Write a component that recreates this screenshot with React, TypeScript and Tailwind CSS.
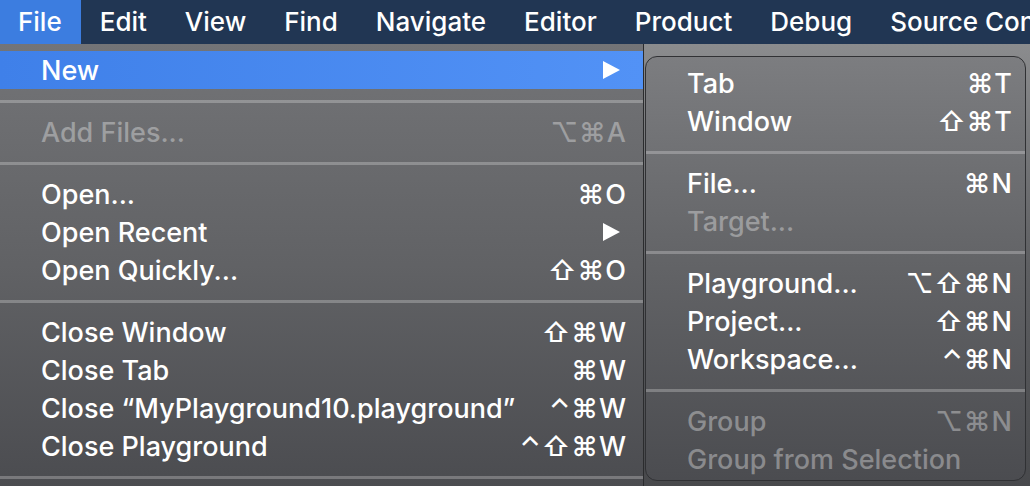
import React from "react";

type Item =
  | { type: "sep" }
  | { type: "item"; label: string; shortcut?: string; disabled?: boolean; submenu?: boolean; active?: boolean };

const leftItems: Item[] = [
  { type: "item", label: "New", submenu: true, active: true },
  { type: "sep" },
  { type: "item", label: "Add Files...", shortcut: "⌥⌘A", disabled: true },
  { type: "sep" },
  { type: "item", label: "Open...", shortcut: "⌘O" },
  { type: "item", label: "Open Recent", submenu: true },
  { type: "item", label: "Open Quickly...", shortcut: "⇧⌘O" },
  { type: "sep" },
  { type: "item", label: "Close Window", shortcut: "⇧⌘W" },
  { type: "item", label: "Close Tab", shortcut: "⌘W" },
  { type: "item", label: "Close “MyPlayground10.playground”", shortcut: "⌃⌘W" },
  { type: "item", label: "Close Playground", shortcut: "⌃⇧⌘W" },
  { type: "sep" },
];

const rightItems: Item[] = [
  { type: "item", label: "Tab", shortcut: "⌘T" },
  { type: "item", label: "Window", shortcut: "⇧⌘T" },
  { type: "sep" },
  { type: "item", label: "File...", shortcut: "⌘N" },
  { type: "item", label: "Target...", disabled: true },
  { type: "sep" },
  { type: "item", label: "Playground...", shortcut: "⌥⇧⌘N" },
  { type: "item", label: "Project...", shortcut: "⇧⌘N" },
  { type: "item", label: "Workspace...", shortcut: "⌃⌘N" },
  { type: "sep" },
  { type: "item", label: "Group", shortcut: "⌥⌘N", disabled: true },
  { type: "item", label: "Group from Selection", disabled: true },
];

const Triangle = () => (
  <svg width="18" height="18" viewBox="0 0 18 18" className="mr-[7px]">
    <polygon points="1,0 18,9 1,18" fill="#ffffff" />
  </svg>
);

function Rows({ items, pl, pr }: { items: Item[]; pl: string; pr: string }) {
  return (
    <>
      {items.map((it, i) =>
        it.type === "sep" ? (
          <div key={i} className="h-[24px] flex items-center">
            <div className="h-[3px] w-full bg-white/25" />
          </div>
        ) : (
          <div
            key={i}
            className={`h-[38px] flex items-center justify-between ${pl} ${pr} ${
              it.active ? "bg-gradient-to-r from-[#3f80e9] to-[#5292f6]" : ""
            } ${it.disabled ? "text-white/35" : "text-white"}`}
          >
            <span className="whitespace-nowrap">{it.label}</span>
            {it.submenu ? (
              <Triangle />
            ) : it.shortcut ? (
              <span className="whitespace-nowrap tracking-[1px]">{it.shortcut}</span>
            ) : null}
          </div>
        )
      )}
    </>
  );
}

export default function App() {
  const bar = ["File", "Edit", "View", "Find", "Navigate", "Editor", "Product", "Debug", "Source Control"];
  return (
    <div className="w-[1030px] h-[486px] overflow-hidden flex flex-col font-['Inter','DejaVu_Sans',sans-serif] font-medium bg-[#4a4b4e]">
      <div className="h-[44px] shrink-0 flex bg-[#213653] text-white text-[26px] leading-none whitespace-nowrap">
        {bar.map((b, i) => (
          <div
            key={b}
            className={`h-full flex items-center shrink-0 px-[19px] ${i === 0 ? "bg-[#3c7de0] pl-[18px]" : ""}`}
          >
            {b}
          </div>
        ))}
      </div>
      <div className="flex flex-1 min-h-0">
        <div className="w-[644px] shrink-0 border-r border-[#2b2c2e] pt-[7px] text-[27px] leading-none bg-gradient-to-b from-[#737477] via-[#616265] to-[#4b4c50]">
          <Rows items={leftItems} pl="pl-[41px]" pr="pr-[16px]" />
        </div>
        <div className="flex-1 pt-[12px] pl-[1px] pr-[4px] bg-gradient-to-b from-[#8b8c8e] via-[#5e5f62] to-[#48494c]">
          <div className="h-[425px] rounded-[12px] border border-[#303134] pt-[7px] text-[27px] leading-none bg-gradient-to-b from-[#7c7d80] via-[#626366] to-[#4b4c50] overflow-hidden">
            <Rows items={rightItems} pl="pl-[41px]" pr="pr-[12px]" />
          </div>
        </div>
      </div>
    </div>
  );
}
